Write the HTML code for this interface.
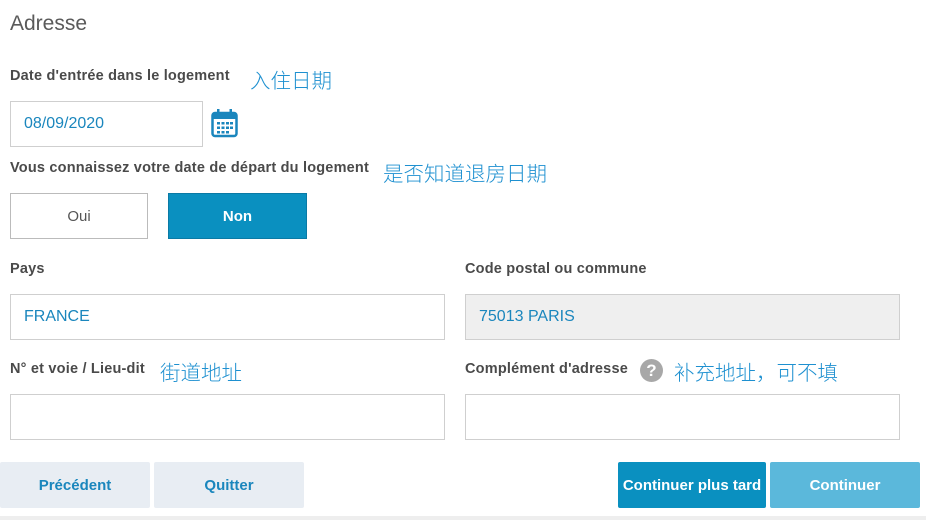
<!DOCTYPE html>
<html><head><meta charset="utf-8"><style>
body{margin:0;width:926px;height:520px;background:#fff;position:relative;overflow:hidden;font-family:"Liberation Sans","Noto Sans CJK SC",sans-serif;}
.a{position:absolute;}
.lbl{font-size:14.5px;color:#4a4a4a;font-weight:bold;letter-spacing:0.2px}
.cn{font-size:20.5px;color:#1e90d0;font-family:"Noto Sans CJK SC",sans-serif;font-weight:300}
.box{position:absolute;border:1px solid #cfcfcf;box-sizing:border-box;background:#fff;font-size:16px;color:#1a86bd;padding-left:13px;display:flex;align-items:center}
.btn{position:absolute;display:flex;align-items:center;justify-content:center;font-size:15px;font-weight:bold;box-sizing:border-box;border-radius:2px}
</style></head><body>
<div class="a" style="left:10px;top:12px;font-size:21px;color:#5a5a5a">Adresse</div>
<div class="a lbl" style="left:10px;top:68px">Date d'entrée dans le logement</div>
<div class="a cn" style="left:250px;top:64px">入住日期</div>
<div class="box" style="left:10px;top:101px;width:193px;height:46px">08/09/2020</div>
<svg class="a" style="left:211px;top:109px" width="27" height="29" viewBox="0 0 27 29"><rect x="1.5" y="4" width="24" height="23" rx="2.5" fill="none" stroke="#1a86bd" stroke-width="2.5"/><rect x="1.5" y="4" width="24" height="6" fill="#1a86bd"/><rect x="6" y="0" width="2.5" height="7" fill="#1a86bd"/><rect x="18.5" y="0" width="2.5" height="7" fill="#1a86bd"/><g fill="#1a86bd"><rect x="6" y="13" width="3" height="2.5"/><rect x="10.5" y="13" width="3" height="2.5"/><rect x="15" y="13" width="3" height="2.5"/><rect x="19" y="13" width="3" height="2.5"/><rect x="6" y="17.5" width="3" height="2.5"/><rect x="10.5" y="17.5" width="3" height="2.5"/><rect x="15" y="17.5" width="3" height="2.5"/><rect x="19" y="17.5" width="3" height="2.5"/><rect x="6" y="22" width="3" height="2.5"/><rect x="10.5" y="22" width="3" height="2.5"/><rect x="15" y="22" width="3" height="2.5"/></g></svg>
<div class="a lbl" style="left:10px;top:160px">Vous connaissez votre date de départ du logement</div>
<div class="a cn" style="left:383px;top:157px">是否知道退房日期</div>
<div class="btn" style="left:10px;top:193px;width:138px;height:46px;border:1px solid #bbb;color:#555;font-weight:normal;border-radius:0">Oui</div>
<div class="btn" style="left:168px;top:193px;width:139px;height:46px;background:#0a90c0;color:#fff;border:1px solid #0a7aa5;border-radius:0">Non</div>
<div class="a lbl" style="left:10px;top:261px">Pays</div>
<div class="a lbl" style="left:465px;top:261px">Code postal ou commune</div>
<div class="box" style="left:10px;top:294px;width:435px;height:46px">FRANCE</div>
<div class="box" style="left:465px;top:294px;width:435px;height:46px;background:#efefef;color:#1a86bd">75013 PARIS</div>
<div class="a lbl" style="left:10px;top:361px">N° et voie / Lieu-dit</div>
<div class="a cn" style="left:160px;top:356px">街道地址</div>
<div class="a lbl" style="left:465px;top:361px">Complément d'adresse</div>
<div class="a" style="left:640px;top:359px;width:23px;height:23px;border-radius:50%;background:#a8a8a8;color:#fff;font-weight:bold;font-size:17px;text-align:center;line-height:23px">?</div>
<div class="a cn" style="left:674px;top:356px">补充地址，可不填</div>
<div class="box" style="left:10px;top:394px;width:435px;height:46px"></div>
<div class="box" style="left:465px;top:394px;width:435px;height:46px"></div>
<div class="btn" style="left:0;top:462px;width:150px;height:46px;background:#e8edf3;color:#1a86bd">Précédent</div>
<div class="btn" style="left:154px;top:462px;width:150px;height:46px;background:#e8edf3;color:#1a86bd">Quitter</div>
<div class="btn" style="left:618px;top:462px;width:148px;height:46px;background:#0a90c0;color:#fff">Continuer plus tard</div>
<div class="btn" style="left:770px;top:462px;width:150px;height:46px;background:#5bb8db;color:#fff">Continuer</div>
<div class="a" style="left:0;top:516px;width:926px;height:4px;background:#eeeeee"></div>
</body></html>
